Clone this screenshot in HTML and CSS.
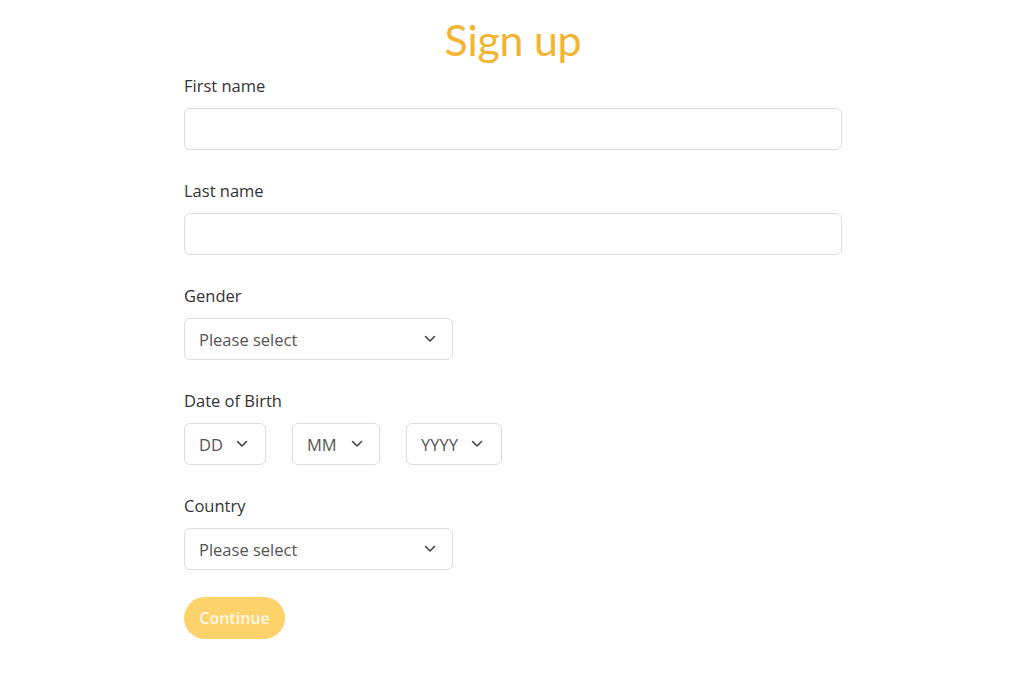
FILE: index.html
```html
<!DOCTYPE html>
<html lang="en">
<head>
<meta charset="utf-8">
<title>Sign up</title>
<link rel="stylesheet" href="styles.css">
</head>
<body>
<main class="page">
  <h1 class="title">Sign up</h1>
  <form class="form">
    <div class="field">
      <label class="label">First name</label>
      <div class="input"></div>
    </div>
    <div class="field">
      <label class="label">Last name</label>
      <div class="input"></div>
    </div>
    <div class="field">
      <label class="label">Gender</label>
      <div class="select select-wide"><span>Please select</span><svg class="chev" viewBox="0 0 12 8"><path d="M1.5 1.5 6 6l4.5-4.5"/></svg></div>
    </div>
    <div class="field">
      <label class="label">Date of Birth</label>
      <div class="dob">
        <div class="select select-dd"><span>DD</span><svg class="chev" viewBox="0 0 12 8"><path d="M1.5 1.5 6 6l4.5-4.5"/></svg></div>
        <div class="select select-mm"><span>MM</span><svg class="chev" viewBox="0 0 12 8"><path d="M1.5 1.5 6 6l4.5-4.5"/></svg></div>
        <div class="select select-yy"><span>YYYY</span><svg class="chev" viewBox="0 0 12 8"><path d="M1.5 1.5 6 6l4.5-4.5"/></svg></div>
      </div>
    </div>
    <div class="field">
      <label class="label">Country</label>
      <div class="select select-wide"><span>Please select</span><svg class="chev" viewBox="0 0 12 8"><path d="M1.5 1.5 6 6l4.5-4.5"/></svg></div>
    </div>
    <button type="button" class="btn">Continue</button>
  </form>
</main>
</body>
</html>
```
FILE: styles.css
```css
* { box-sizing: border-box; }
html, body { margin: 0; padding: 0; background: #fff; }
body { font-family: "Open Sans", "Noto Sans", sans-serif; color: #333; }
.page { width: 660px; margin: 0 auto; padding-left: 2px; }
.title {
  margin: 0;
  padding-top: 14px;
  text-align: center;
  font-family: "Lato", sans-serif;
  font-weight: 400;
  font-size: 43px;
  line-height: 52px;
  color: #f2b532;
  letter-spacing: -0.3px;
}
.form { display: flex; flex-direction: column; gap: 29px; margin-top: 8px; }
.field { display: flex; flex-direction: column; gap: 10px; }
.label { font-size: 16.5px; line-height: 24px; color: #333; }
.input {
  height: 42px;
  width: 658px;
  border: 1px solid #dcdcdc;
  border-radius: 6px;
}
.select {
  height: 42px;
  border: 1px solid #dcdcdc;
  border-radius: 6px;
  display: flex;
  align-items: center;
  padding: 0 14px;
  font-size: 16.5px;
  color: #555;
}
.select-wide { width: 269px; justify-content: space-between; padding-right: 16px; }
.select-dd { width: 82px; gap: 13px; }
.select-mm { width: 88px; gap: 14px; }
.select-yy { width: 96px; gap: 13px; }
.chev { width: 12px; height: 8px; fill: none; stroke: #444; stroke-width: 1.6; stroke-linecap: round; stroke-linejoin: round; }
.dob { display: flex; gap: 26px; }
.btn {
  align-self: flex-start;
  margin-top: -2px;
  width: 101px;
  height: 42px;
  border: none;
  border-radius: 21px;
  background: #fdd26b;
  color: #fff8e6;
  font-family: "Open Sans", sans-serif;
  font-weight: 600;
  font-size: 16px;
  padding: 0;
}
```
